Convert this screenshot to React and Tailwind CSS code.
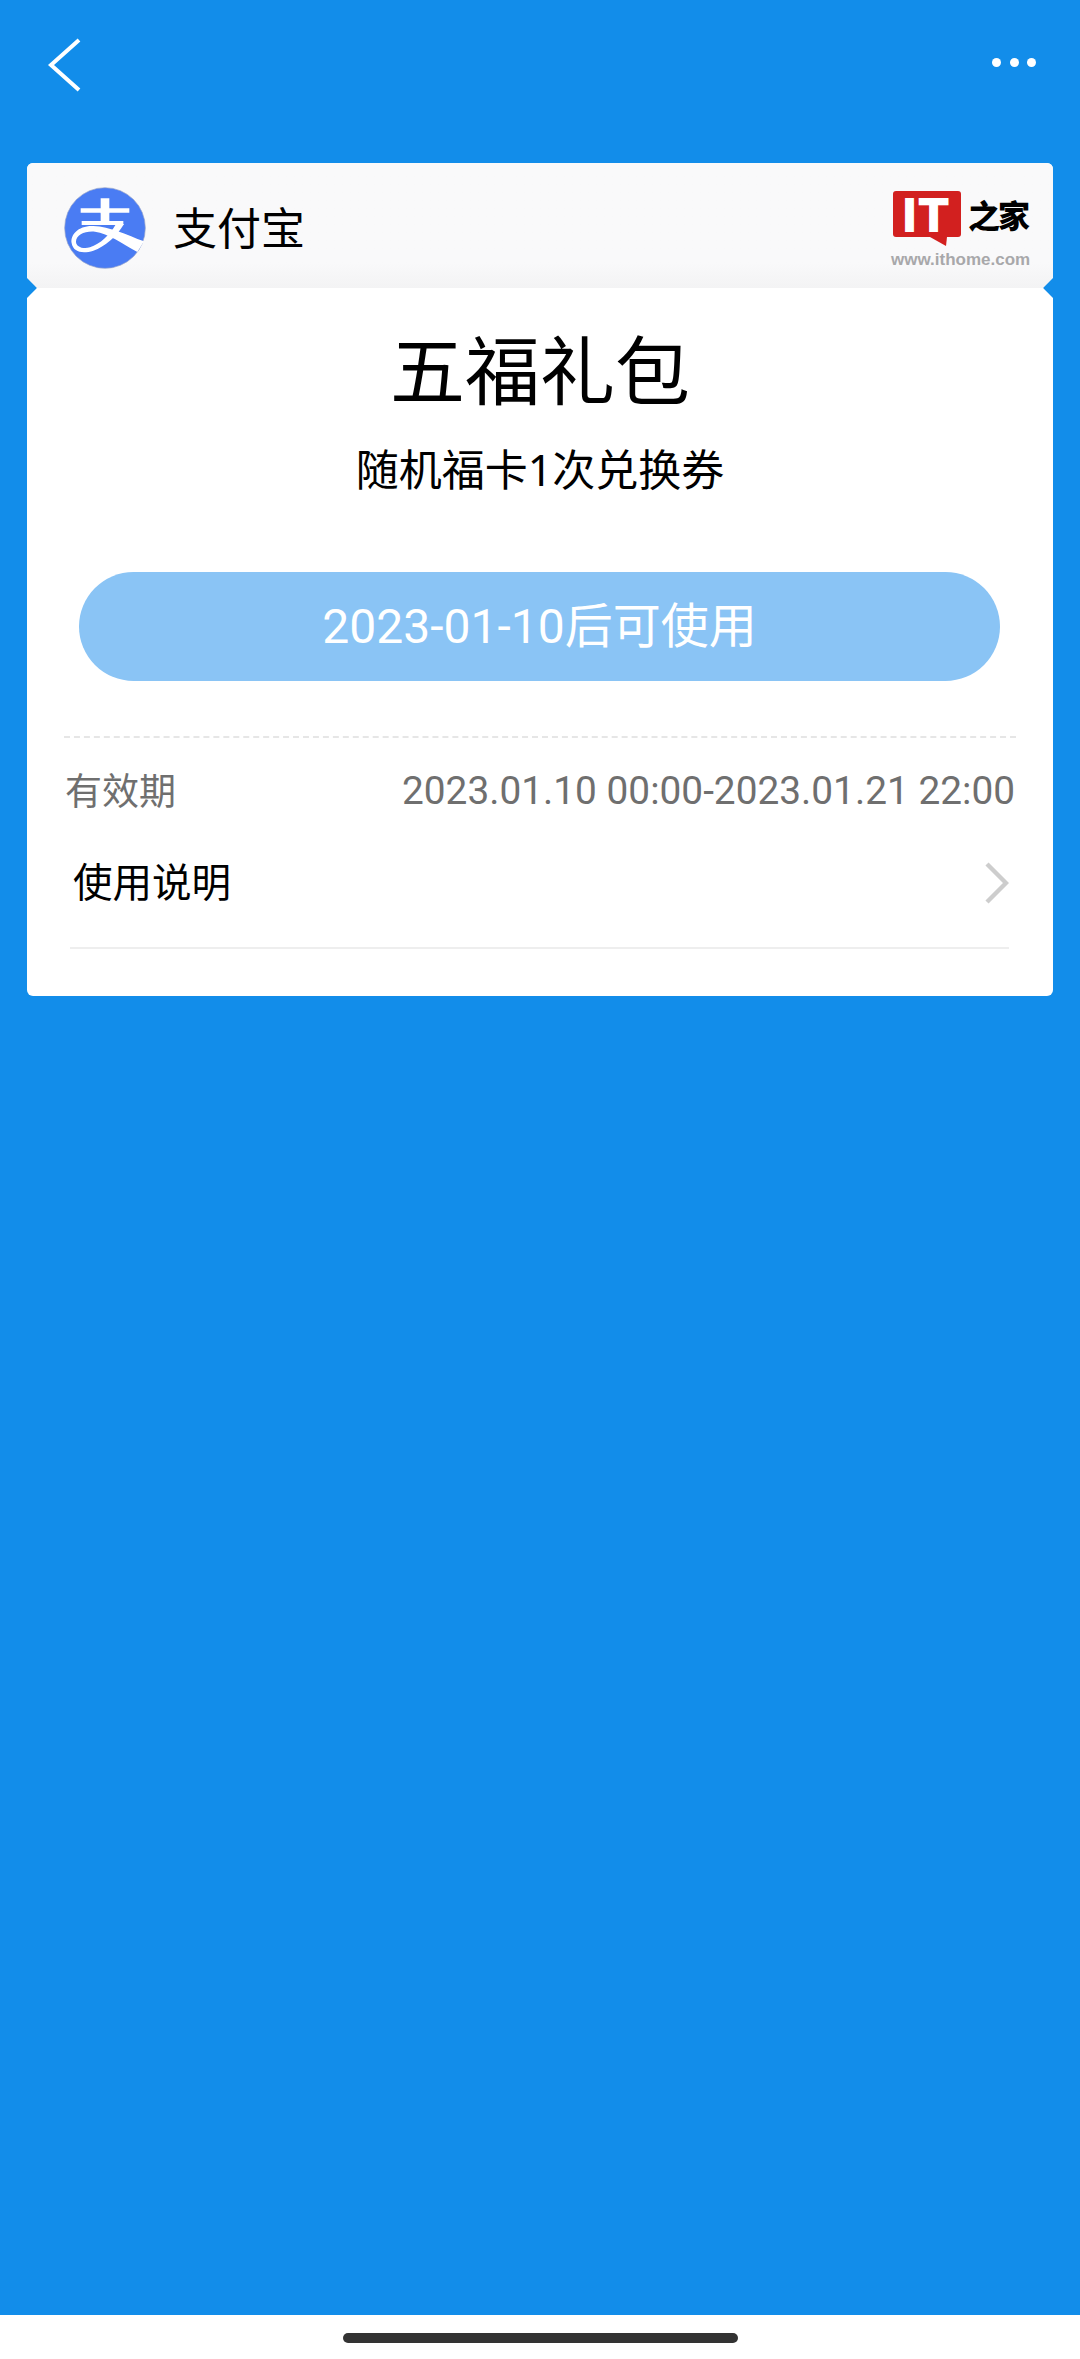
import React from 'react';

const cjk = '[font-family:"Noto_Sans","Noto_Sans_CJK_SC",sans-serif]';
const digits = '[font-family:"Roboto","Noto_Sans_CJK_SC",sans-serif]';

// red speech-bubble mark with the wordmark beside it
const IthomeLogo = () => (
  <div className="flex flex-col items-start w-[139px] mt-[3px]">
    <div className="flex items-start h-[53px]">
      <div className="relative w-[68px] h-[46px] bg-[#d2201f] rounded-[3px] flex items-center justify-center">
        <span className="font-['Liberation_Sans',sans-serif] font-bold text-white text-[47px] leading-none tracking-[3px] [-webkit-text-stroke:2px_white]">IT</span>
        <svg className="absolute left-[37px] top-[46px]" width="17" height="9" viewBox="0 0 17 9">
          <path d="M0 0H17L16 9Z" fill="#d2201f" />
        </svg>
      </div>
      <span className="ml-[7px] mt-[-2px] text-[32px] leading-[50px] font-black text-black font-['Noto_Sans_CJK_SC',sans-serif] tracking-[-2px] whitespace-nowrap">之家</span>
    </div>
    <span className="mt-[9px] ml-[-2px] text-[17px] leading-[14px] font-bold text-[#a8a8aa] font-['Liberation_Sans',sans-serif] whitespace-nowrap">www.ithome.com</span>
  </div>
);

const AlipayIcon = () => (
  <svg width="82" height="82" viewBox="12 21 246 246">
    <circle cx="135" cy="144" r="121" fill="#4a7cf3" stroke="#9aa6c8" strokeWidth="2" />
    <path d="M62 85H208V98H148V123H190V135H65V123H122V98H62Z" fill="#fff" />
    <path d="M122 55H148V100H122Z" fill="#fff" />
    <path
      d="M252 184C200 165 150 140 100 138C55 136 30 165 35 190C40 218 70 222 100 212C135 200 170 170 192 132L168 132C150 165 120 192 90 202C68 208 48 200 48 185C48 165 75 152 105 155C145 160 185 190 232 216Z"
      fill="#fff"
    />
  </svg>
);

export default function App() {
  return (
    <div className={`w-[1080px] h-[2359px] bg-white flex flex-col ${cjk}`}>
      <div className="h-[2315px] bg-[#128dea] flex flex-col">
        {/* top bar */}
        <div className="h-[163px] flex items-start justify-between pt-[38px] pl-[47px] pr-[44px]">
          <svg width="34" height="54" viewBox="0 0 34 54">
            <path d="M32 2L4 27L32 52" fill="none" stroke="#fff" strokeWidth="4" />
          </svg>
          <div className="flex gap-[8.5px] mt-[20px]">
            <span className="w-[9px] h-[9px] rounded-full bg-white" />
            <span className="w-[9px] h-[9px] rounded-full bg-white" />
            <span className="w-[9px] h-[9px] rounded-full bg-white" />
          </div>
        </div>

        {/* voucher card */}
        <div className="relative mx-[27px] w-[1026px] h-[833px] rounded-[6px] bg-white overflow-hidden">
          <div className="h-[125px] bg-gradient-to-b from-[#f9f9fa] from-80% to-[#f3f3f4] flex items-center pt-[4px] pl-[37px] pr-[21px]">
            <AlipayIcon />
            <span className="ml-[27px] text-[44px] leading-none text-black">支付宝</span>
            <div className="ml-auto">
              <IthomeLogo />
            </div>
          </div>

          <div className="flex flex-col items-center">
            <h1 className="mt-[44px] text-[75px] leading-[76px] text-black font-normal">五福礼包</h1>
            <p className="mt-[37px] text-[43px] leading-[50px] text-black">随机福卡1次兑换券</p>
            <div className={`mt-[77px] ml-[-1px] w-[921px] h-[109px] rounded-full bg-[#8ac4f5] flex items-center justify-center text-[48px] text-white ${digits}`}>
              2023-01-10后可使用
            </div>
          </div>

          <div className="mx-[37px] mt-[55px] border-t-2 border-dashed border-[#e6e6e6]" />
          <div className="mx-[38px] mt-[28px] flex items-center justify-between leading-[50px] text-[#6f6f6f]">
            <span className="text-[37px]">有效期</span>
            <span className={`text-[38.8px] ${digits}`}>2023.01.10 00:00-2023.01.21 22:00</span>
          </div>
          <div className="mx-[44px] mt-[40px] flex items-center justify-between h-[54px]">
            <span className="ml-[2px] text-[39.5px] leading-none text-black">使用说明</span>
            <svg width="24" height="42" viewBox="0 0 24 42">
              <path d="M2 2L21 21L2 40" fill="none" stroke="#cdcdcd" strokeWidth="4.4" />
            </svg>
          </div>
          <div className="ml-[43px] mr-[44px] mt-[37px] border-t-2 border-[#eeeeee]" />

          {/* punched notches where the header meets the body */}
          <span className="absolute left-[-7px] top-[118px] w-[14px] h-[14px] rotate-45 bg-[#128dea]" />
          <span className="absolute right-[-7px] top-[118px] w-[14px] h-[14px] rotate-45 bg-[#128dea]" />
        </div>
      </div>

      {/* home indicator */}
      <div className="flex-1 flex justify-center pt-[18px]">
        <div className="w-[395px] h-[10px] rounded-full bg-[#333333]" />
      </div>
    </div>
  );
}
